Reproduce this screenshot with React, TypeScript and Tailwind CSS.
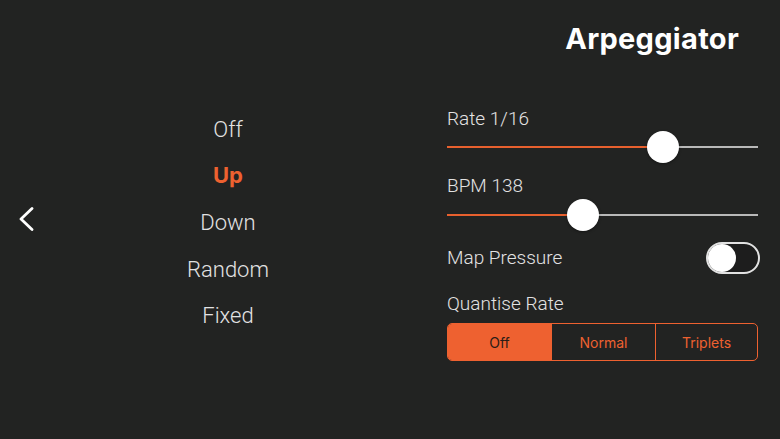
import React from "react";

function Slider({ value }: { value: number }) {
  return (
    <div className="relative h-[32px] w-full flex items-center">
      <div className="flex w-full h-[2px]">
        <div className="h-full bg-[#e8602e]" style={{ width: `${value * 100}%` }} />
        <div className="h-full flex-1 bg-[#b9b9b9]" />
      </div>
      <div
        className="absolute top-0 h-[32px] w-[32px] -ml-[16px] rounded-full bg-white shadow-[0_1px_3px_rgba(0,0,0,0.4)]"
        style={{ left: `${value * 100}%` }}
      />
    </div>
  );
}

const light = { fontFamily: "Roboto, 'Noto Sans', sans-serif", fontWeight: 300 } as const;

export default function App() {
  const modes = ["Off", "Up", "Down", "Random", "Fixed"];
  return (
    <div
      className="w-[780px] h-[439px] bg-[#222322] text-[#e2e2e2] overflow-hidden flex flex-col"
      style={{ fontFamily: "Inter, 'Noto Sans', sans-serif" }}
    >
      <div className="flex justify-end pr-[41px] pt-[22px] h-[107px]">
        <h1 className="text-[29px] leading-[34px] font-bold text-white tracking-[0.3px]">Arpeggiator</h1>
      </div>
      <div className="flex flex-1">
        <div className="w-[60px] flex items-start pt-[100px] pl-[18px]">
          <svg width="16" height="24" viewBox="0 0 16 24" fill="none">
            <polyline points="14,1.5 3,12 14,22.5" stroke="white" strokeWidth="2.8" strokeLinecap="round" strokeLinejoin="round" />
          </svg>
        </div>
        <div className="w-[336px] flex flex-col items-center -mt-[1px]">
          {modes.map((m) =>
            m === "Up" ? (
              <div key={m} className="h-[46.6px] flex items-center text-[22px] font-bold text-[#ee6130]">
                {m}
              </div>
            ) : (
              <div key={m} className="h-[46.6px] flex items-center text-[22px] text-[#e2e2e2]" style={light}>
                {m}
              </div>
            )
          )}
        </div>
        <div className="w-[51px]" />
        <div className="w-[311px] flex flex-col" style={light}>
          <div className="h-[24px] text-[19px] leading-[24px]">Rate 1/16</div>
          <Slider value={0.695} />
          <div className="h-[24px] mt-[11px] text-[19px] leading-[24px]">BPM 138</div>
          <div className="mt-[1px]">
            <Slider value={0.437} />
          </div>
          <div className="mt-[11px] h-[32px] flex items-center justify-between">
            <span className="text-[19px]">Map Pressure</span>
            <div className="relative w-[54px] h-[32px] rounded-full border-2 border-[#e2e2e2] bg-[#1d1d1d] -mr-[2px]">
              <div className="absolute left-[0px] top-[0px] w-[28px] h-[28px] rounded-full bg-white" />
            </div>
          </div>
          <div className="h-[24px] mt-[18px] text-[19px] leading-[24px]">Quantise Rate</div>
          <div
            className="mt-[7px] h-[38px] flex rounded-[5px] border border-[#ee6130] overflow-hidden text-[14px]"
            style={{ fontFamily: "Inter, 'Noto Sans', sans-serif", fontWeight: 400 }}
          >
            <div className="w-[103px] flex items-center justify-center bg-[#ee6130] text-[#2a1c16]">Off</div>
            <div className="w-[104px] flex items-center justify-center border-l border-[#ee6130] text-[#ee6130]">Normal</div>
            <div className="flex-1 flex items-center justify-center border-l border-[#ee6130] text-[#ee6130]">Triplets</div>
          </div>
        </div>
      </div>
    </div>
  );
}
